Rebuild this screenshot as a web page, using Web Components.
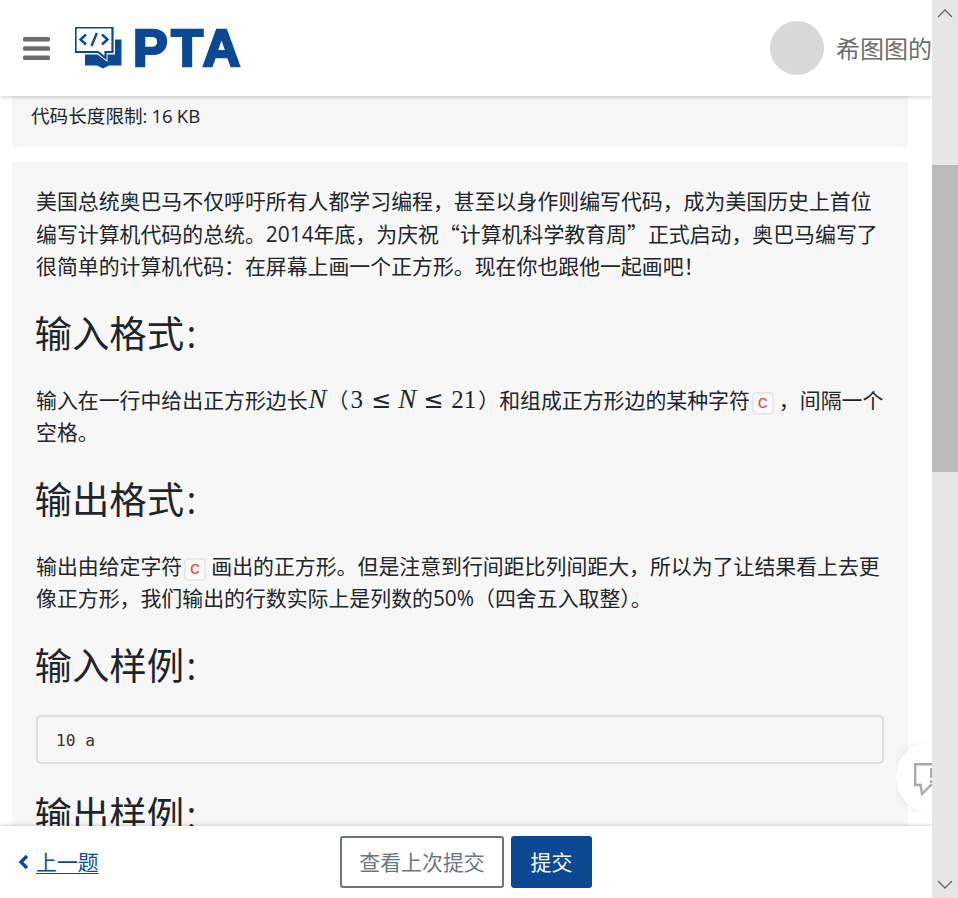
<!DOCTYPE html>
<html lang="zh-CN"><head><meta charset="utf-8"><title>PTA</title>
<style>
html,body{margin:0;height:100%;overflow:hidden;background:#fff}
body{font-family:"Open Sans","Noto Sans CJK SC",sans-serif;font-size:20.9px;line-height:32.5px;color:#212529}
</style></head><body>
<pta-app>
  <pta-header slot="header" name="希图图的"></pta-header>
  <pta-card variant="limit">代码长度限制: 16 KB</pta-card>
  <pta-card>
    <pta-para>美国总统奥巴马不仅呼吁所有人都学习编程，甚至以身作则编写代码，成为美国历史上首位编写计算机代码的总统。2014年底，为庆祝<pta-q>“</pta-q>计算机科学教育周<pta-q>”</pta-q>正式启动，奥巴马编写了很简单的计算机代码：在屏幕上画一个正方形。现在你也跟他一起画吧！</pta-para>
    <pta-heading>输入格式<pta-colon>:</pta-colon></pta-heading>
    <pta-para>输入在一行中给出正方形边长<pta-math>N</pta-math>（<pta-math plain>3</pta-math><pta-math rel>≤</pta-math><pta-math>N</pta-math><pta-math rel>≤</pta-math><pta-math plain>21</pta-math>）和组成正方形边的某种字符<pta-code>c</pta-code>，间隔一个空格。</pta-para>
    <pta-heading>输出格式<pta-colon>:</pta-colon></pta-heading>
    <pta-para>输出由给定字符<pta-code>c</pta-code>画出的正方形。但是注意到行间距比列间距大，所以为了让结果看上去更像正方形，我们输出的行数实际上是列数的50%（四舍五入取整）。</pta-para>
    <pta-heading>输入样例<pta-colon>:</pta-colon></pta-heading>
    <pta-sample>10 a</pta-sample>
    <pta-heading>输出样例<pta-colon>:</pta-colon></pta-heading>
  </pta-card>
  <pta-footer slot="footer"></pta-footer>
  <pta-feedback slot="overlay"></pta-feedback>
  <pta-scrollbar slot="scrollbar"></pta-scrollbar>
</pta-app>
<script>
function def(name, css, html, init){
  customElements.define(name, class extends HTMLElement{
    constructor(){super();const s=this.attachShadow({mode:'open'});s.innerHTML='<style>'+css+'</style>'+html;}
    connectedCallback(){if(init)init(this,this.shadowRoot);}
  });
}
def('pta-app',`
  :host{display:grid;grid-template-columns:932px 26px;width:958px;height:898px;overflow:hidden}
  .main{position:relative;display:flex;flex-direction:column;height:898px;min-width:0;overflow:visible}
  .view{flex:1;min-height:0;overflow:hidden;padding:0 24px 0 12px;display:flex;flex-direction:column;gap:15px}
  .ov{position:absolute;right:-26px;top:741px;width:62px;height:72px;overflow:hidden;z-index:3}
  .sb{position:relative;z-index:4}
`,`<div class="main"><slot name="header"></slot><div class="view"><slot></slot></div><slot name="footer"></slot><div class="ov"><slot name="overlay"></slot></div></div><div class="sb"><slot name="scrollbar"></slot></div>`);
def('pta-header',`
  :host{display:flex;align-items:center;flex:none;height:96px;background:#fff;box-shadow:0 1px 5px rgba(0,0,0,.2);position:relative;z-index:2;overflow:hidden}
  .menu{margin-left:23px;width:27px;height:23px;display:block;flex:none}
  .logo{margin-left:25px;display:flex;align-items:center;gap:11px;flex:none}
  .pta{font:700 52px/50px "Liberation Sans",sans-serif;color:#0b4a92;-webkit-text-stroke:2.6px #0b4a92;letter-spacing:3.6px;margin-top:-1px;white-space:nowrap}
  .sp{flex:1}
  .av{width:54px;height:54px;border-radius:50%;background:#d8d8d8;flex:none}
  .name{margin-left:12px;font:24px/32px "Noto Sans CJK SC",sans-serif;color:#6c6c6c;white-space:nowrap;flex:none;width:96px}
`,`<svg class="menu" viewBox="0 0 27 23"><g fill="#6c6c6c"><rect y="0" width="27" height="4.6" rx="1.5"/><rect y="9.2" width="27" height="4.6" rx="1.5"/><rect y="18.4" width="27" height="4.6" rx="1.5"/></g></svg>
<div class="logo"><svg width="47" height="42" viewBox="0 0 47 42">
<path d="M0.5 0.5H37.5V25H30.5V31L23 25H0.5Z" fill="#fff" stroke="#0b4a92" stroke-width="2.2"/>
<path d="M11 7.5L5.5 12.5L11 17.5M27 7.5L32.5 12.5L27 17.5" fill="none" stroke="#0b4a92" stroke-width="2.4"/>
<path d="M21.8 6L16.5 19" fill="none" stroke="#0b4a92" stroke-width="2.4"/>
<path d="M10 27.5H22.5L32.5 35V27.5H40V12.5H46.5V38.5H34L28 41.5L22 38.5H10Z" fill="#0b4a92"/>
</svg><span class="pta">PTA</span></div><div class="sp"></div><div class="av"></div><div class="name"></div>`,
(h,s)=>{s.querySelector('.name').textContent=h.getAttribute('name')});
def('pta-card',`
  :host{display:block;flex:none;background:#f7f7f7;padding:23px 24px 40px}
  :host([variant=limit]){background:#f5f5f5;padding:14px 19px 15px;margin-top:-10px;border-radius:6px;font-size:18.6px;line-height:32px;height:32px;word-spacing:-.8px}
`,`<slot></slot>`);
def('pta-para',`:host{display:block;margin:0}`,`<slot></slot>`);
def('pta-q',`:host{font-family:"Noto Sans CJK SC",sans-serif;line-height:1}`,`<slot></slot>`);
def('pta-colon',`:host{margin-left:2.5px}`,`<slot></slot>`);
def('pta-heading',`:host{display:block;font-size:37.4px;line-height:56px;margin:23px 0 22px -1.5px}`,`<slot></slot>`);
def('pta-code',`
  :host{display:inline-block;font:18px/19px "Liberation Mono",monospace;color:#e74c3c;background:#fafafa;border:2px solid #e9e9e9;border-radius:4px;padding:0 3.6px;margin:-6px 5px -6px 2px;vertical-align:0}
`,`<slot></slot>`);
def('pta-math',`
  :host{font:italic 27px/1 "Liberation Serif",serif;margin:0 1px}
  :host([plain]){font:25px/1 "Liberation Serif",serif;margin:0 2px}
  :host([rel]){font:24px/1 "DejaVu Sans",sans-serif;margin:0 6px}
`,`<slot></slot>`);
def('pta-sample',`
  :host{display:block;border:2px solid #dedede;border-radius:5px;background:#f7f7f7;padding:8px 18px 6px;font:16.2px/31px "DejaVu Sans Mono",monospace;color:#333;height:31px;margin:-1px 0 5px}
`,`<slot></slot>`);
def('pta-footer',`
  :host{display:flex;align-items:center;flex:none;height:72px;background:#fff;box-shadow:0 -1px 3px rgba(0,0,0,.18);position:relative;z-index:2;font-size:20.9px}
  .prev{display:flex;align-items:center;margin-left:18px;width:322px;color:#0b4a92}
  .prev svg{width:11px;height:16px;margin-right:7px;flex:none}
  .prev u{text-underline-offset:3px;text-decoration-thickness:1px}
  .btn{box-sizing:border-box;height:52px;display:flex;align-items:center;justify-content:center;border-radius:3px}
  .ghost{width:164px;border:2px solid #6c757d;color:#6c757d}
  .solid{width:81px;margin-left:7px;background:#0b4a92;color:#fff}
`,`<div class="prev"><svg viewBox="0 0 11 16"><path d="M9 2L3 8L9 14" fill="none" stroke="#0b4a92" stroke-width="3.4"/></svg><u>上一题</u></div><div class="btn ghost">查看上次提交</div><div class="btn solid">提交</div>`);
def('pta-feedback',`
  :host{display:block;width:72px;height:72px;border-radius:50%;background:#fff;box-shadow:0 0 12px rgba(0,0,0,.08)}
  svg{position:absolute;left:18px;top:22px}
`,`<svg width="30" height="36" viewBox="0 0 30 36"><path d="M1.2 1.2H30V22H17L8 31L6.5 22H1.2Z" fill="none" stroke="#aaa" stroke-width="2.4"/><path d="M17.5 5V15" stroke="#aaa" stroke-width="3"/><path d="M17.5 17V20" stroke="#aaa" stroke-width="3"/></svg>`);
def('pta-scrollbar',`
  :host{display:flex;flex-direction:column;width:26px;height:898px;background:#e6e6e6}
  svg{display:block;flex:none}
  .t{height:139px;flex:none}
  .th{height:307px;background:#b9b9b9;flex:none}
  .f{flex:1}
`,`<svg width="26" height="26" viewBox="0 0 26 26"><path d="M6 17L13 10L20 17" fill="none" stroke="#666" stroke-width="1.3"/></svg><div class="t"></div><div class="th"></div><div class="f"></div><svg width="26" height="26" viewBox="0 0 26 26"><path d="M6 9L13 16L20 9" fill="none" stroke="#666" stroke-width="1.3"/></svg>`);
</script></body></html>
